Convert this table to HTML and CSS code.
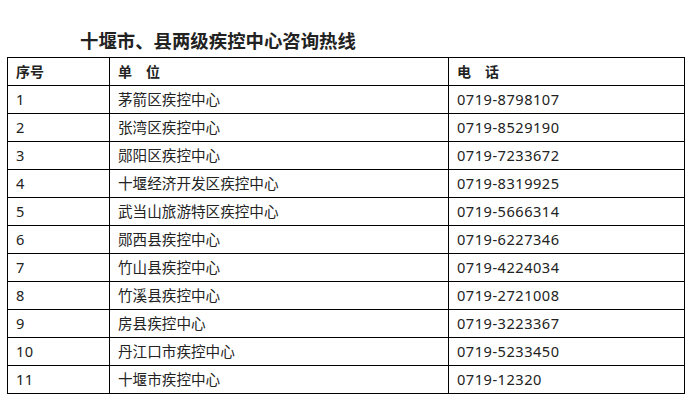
FILE: index.html
```html
<!DOCTYPE html>
<html lang="zh">
<head>
<meta charset="utf-8">
<link rel="stylesheet" href="styles.css">
</head>
<body>
<div class="page">
  <h1 class="title">十堰市、县两级疾控中心咨询热线</h1>
  <table class="grid">
    <colgroup>
      <col class="c1"><col class="c2"><col class="c3">
    </colgroup>
    <thead>
      <tr><th>序号</th><th>单　位</th><th>电　话</th></tr>
    </thead>
    <tbody>
      <tr><td class="num">1</td><td>茅箭区疾控中心</td><td class="num">0719-8798107</td></tr>
      <tr><td class="num">2</td><td>张湾区疾控中心</td><td class="num">0719-8529190</td></tr>
      <tr><td class="num">3</td><td>郧阳区疾控中心</td><td class="num">0719-7233672</td></tr>
      <tr><td class="num">4</td><td>十堰经济开发区疾控中心</td><td class="num">0719-8319925</td></tr>
      <tr><td class="num">5</td><td>武当山旅游特区疾控中心</td><td class="num">0719-5666314</td></tr>
      <tr><td class="num">6</td><td>郧西县疾控中心</td><td class="num">0719-6227346</td></tr>
      <tr><td class="num">7</td><td>竹山县疾控中心</td><td class="num">0719-4224034</td></tr>
      <tr><td class="num">8</td><td>竹溪县疾控中心</td><td class="num">0719-2721008</td></tr>
      <tr><td class="num">9</td><td>房县疾控中心</td><td class="num">0719-3223367</td></tr>
      <tr><td class="num">10</td><td>丹江口市疾控中心</td><td class="num">0719-5233450</td></tr>
      <tr><td class="num">11</td><td>十堰市疾控中心</td><td class="num">0719-12320</td></tr>
    </tbody>
  </table>
</div>
</body>
</html>
```
FILE: styles.css
```css
html, body {
  margin: 0;
  padding: 0;
  background: #fff;
}
.page {
  padding: 0 7px;
  font-family: "Noto Sans", "Noto Sans CJK SC", sans-serif;
  color: #222;
}
.title {
  margin: 0;
  padding: 29px 0 0 73px;
  height: 28px;
  font-size: 18.4px;
  line-height: 22px;
  font-weight: bold;
  color: #222;
  font-family: "Noto Sans CJK SC", sans-serif;
}
.grid {
  border-collapse: collapse;
  width: 677px;
  table-layout: fixed;
}
.c1 { width: 102px; }
.c2 { width: 339px; }
.c3 { width: 236px; }
.grid th, .grid td {
  border: 1px solid #000;
  height: 27px;
  padding: 0 8px;
  text-align: left;
  font-size: 14.6px;
  line-height: 27px;
  font-weight: normal;
  white-space: nowrap;
  vertical-align: middle;
}
.grid td.num {
  letter-spacing: 0.5px;
}
.grid th {
  font-weight: bold;
  font-size: 14px;
  font-family: "Noto Sans CJK SC", sans-serif;
}
```
